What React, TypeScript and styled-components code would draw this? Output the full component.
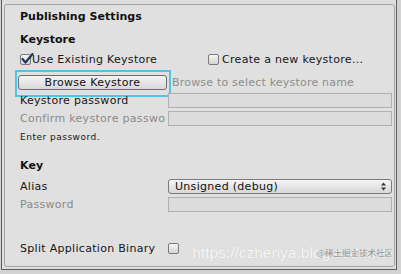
import React from "react";
import styled, { createGlobalStyle } from "styled-components";

const Global = createGlobalStyle`
  html, body { margin: 0; padding: 0; background: #cfcfcf; }
  body { font-family: "DejaVu Sans", Verdana, sans-serif; }
`;

const Frame = styled.div`
  width: 401px;
  height: 274px;
  box-sizing: border-box;
  padding-left: 1px;
  background: #d2d2d2;
  overflow: hidden;
`;

const Window = styled.div`
  width: 396px;
  height: 270px;
  box-sizing: border-box;
  border-left: 1px solid #5e5e5e;
  border-right: 1px solid #5e5e5e;
  border-bottom: 1px solid #5e5e5e;
  background: #dedede;
  padding: 4px 1px 2px 2px;
`;

const Panel = styled.div`
  height: 100%;
  box-sizing: border-box;
  border: 1px solid #a4a4a4;
  border-radius: 3px;
  background: #e0e0e0;
  padding: 5px 2px 0 15px;
  position: relative;
  display: flex;
  flex-direction: column;
`;

const Title = styled.div<{ $mt?: number }>`
  font-weight: bold;
  font-size: 11px;
  color: #111;
  height: 14px;
  line-height: 14px;
  margin-top: ${(p) => p.$mt ?? 0}px;
  letter-spacing: 0.05px;
`;

const Row = styled.div<{ $h?: number; $mt?: number }>`
  display: flex;
  align-items: center;
  height: ${(p) => p.$h ?? 18}px;
  margin-top: ${(p) => p.$mt ?? 0}px;
  position: relative;
`;

const Label = styled.div<{ $disabled?: boolean }>`
  font-size: 11px;
  color: ${(p) => (p.$disabled ? "#8a8a8a" : "#161616")};
  width: 146px;
  margin-right: 2px;
  flex: none;
  white-space: nowrap;
  overflow: hidden;
  letter-spacing: 0.3px;
`;

const Note = styled.div`
  font-size: 9px;
  color: #161616;
  letter-spacing: 0.5px;
  height: 18px;
  line-height: 18px;
  margin-top: 1px;
`;

const Check = styled.span`
  width: 11px;
  height: 11px;
  box-sizing: border-box;
  border: 1px solid #7a7a7a;
  border-radius: 2px;
  background: linear-gradient(#f6f6f6, #d4d4d4);
  flex: none;
  position: relative;
  display: inline-block;
`;

const CheckLabel = styled.label<{ $w?: number }>`
  display: flex;
  align-items: center;
  gap: 1px;
  width: ${(p) => (p.$w ? `${p.$w}px` : "auto")};
  font-size: 11px;
  color: #161616;
  letter-spacing: 0.3px;
  white-space: nowrap;
`;

const Field = styled.div`
  flex: 1;
  height: 15px;
  box-sizing: border-box;
  border: 1px solid #b0b0b0;
  background: #dcdcdc;
`;

const ButtonWrap = styled.div`
  position: relative;
  margin-left: -2px;
  flex: none;
  &::after {
    content: "";
    position: absolute;
    left: -3px;
    right: -4px;
    top: -5px;
    bottom: -7px;
    border: 2px solid #4fc3ea;
    pointer-events: none;
  }
`;

const Button = styled.button`
  width: 149px;
  height: 15px;
  box-sizing: border-box;
  border: 1px solid #6e6e6e;
  border-radius: 3px;
  background: linear-gradient(#f4f4f4, #d8d8d8);
  font-family: "DejaVu Sans", Verdana, sans-serif;
  font-size: 11px;
  letter-spacing: 0.3px;
  color: #111;
  padding: 0;
  line-height: 13px;
  display: block;
`;

const Hint = styled.div`
  font-size: 11px;
  color: #8e8e8e;
  letter-spacing: 0.2px;
  white-space: nowrap;
  margin-left: 5px;
`;

const Popup = styled.div`
  flex: 1;
  height: 15px;
  box-sizing: border-box;
  border: 1px solid #7a7a7a;
  border-radius: 3px;
  background: linear-gradient(#f6f6f6, #d6d6d6);
  display: flex;
  align-items: center;
  justify-content: space-between;
  padding: 0 5px 0 6px;
  font-size: 11px;
  letter-spacing: 0.3px;
  color: #111;
`;

const Watermark = styled.div`
  position: absolute;
  right: 1px;
  bottom: 4px;
  font-family: "Liberation Sans", Arial, sans-serif;
  font-size: 15.5px;
  line-height: 18px;
  color: rgba(255, 255, 255, 0.85);
  text-shadow: 0 0 1px rgba(0, 0, 0, 0.12);
  white-space: nowrap;
  pointer-events: none;
`;

const WatermarkSmall = styled.div`
  position: absolute;
  right: 1px;
  bottom: 9px;
  font-family: "Noto Sans CJK SC", sans-serif;
  font-size: 8.5px;
  line-height: 10px;
  color: rgba(110, 110, 110, 0.7);
  white-space: nowrap;
  pointer-events: none;
`;

const Tick = () => (
  <svg width="13" height="11" viewBox="0 0 13 11" style={{ position: "absolute", left: 0, top: -2 }}>
    <path d="M1.5 6 L4.5 9.5 L11.5 1" stroke="#27355e" strokeWidth="2.2" fill="none" strokeLinecap="round" strokeLinejoin="round" />
  </svg>
);

const Arrows = () => (
  <svg width="5" height="9" viewBox="0 0 5 9">
    <path d="M0 3.5 L2.5 0.5 L5 3.5 Z M0 5.5 L2.5 8.5 L5 5.5 Z" fill="#333" />
  </svg>
);

export default function App() {
  return (
    <>
      <Global />
      <Frame>
        <Window>
          <Panel>
            <Title>Publishing Settings</Title>
            <Title $mt={9}>Keystore</Title>
            <Row $mt={3}>
              <CheckLabel $w={188}>
                <Check>
                  <Tick />
                </Check>
                Use Existing Keystore
              </CheckLabel>
              <CheckLabel>
                <Check />
                <span style={{ marginLeft: 2 }}>Create a new keystore...</span>
              </CheckLabel>
            </Row>
            <Row $mt={5}>
              <ButtonWrap>
                <Button>Browse Keystore</Button>
              </ButtonWrap>
              <Hint>Browse to select keystore name</Hint>
            </Row>
            <Row>
              <Label>Keystore password</Label>
              <Field />
            </Row>
            <Row>
              <Label $disabled>Confirm keystore password</Label>
              <Field />
            </Row>
            <Note>Enter password.</Note>
            <Title $mt={13}>Key</Title>
            <Row $mt={4}>
              <Label>Alias</Label>
              <Popup>
                <span>Unsigned (debug)</span>
                <Arrows />
              </Popup>
            </Row>
            <Row>
              <Label $disabled>Password</Label>
              <Field />
            </Row>
            <Row $mt={26}>
              <Label>Split Application Binary</Label>
              <Check />
            </Row>
            <Watermark>https://czhenya.blog.csdn.net</Watermark>
            <WatermarkSmall>@稀土掘金技术社区</WatermarkSmall>
          </Panel>
        </Window>
      </Frame>
    </>
  );
}
